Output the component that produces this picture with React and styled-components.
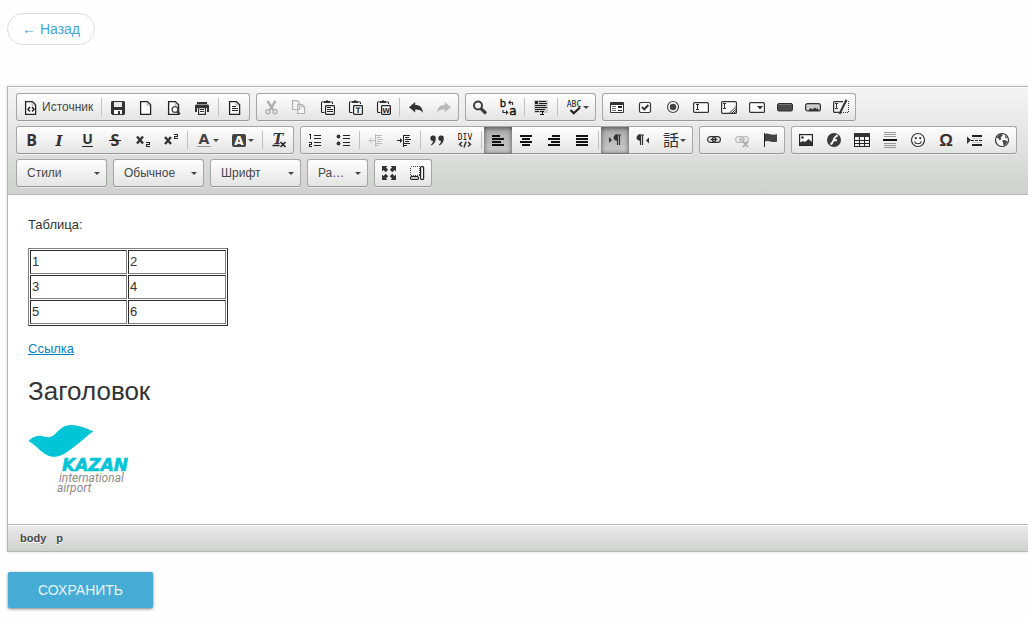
import React from "react";
import styled, { createGlobalStyle, css } from "styled-components";

const GlobalStyle = createGlobalStyle`
  body {
    margin: 0;
    background: #fefefe;
    color: #333;
    font-family: "Liberation Sans", Arial, sans-serif;
    font-size: 13px;
    overflow-x: hidden;
  }
`;

const DOC = "M2.6 2.6h6.8l3.2 3.2v9.6h-10z";
const dark = "#333";

const Glyph = ({ x = 8, y = 13, size = 14, family = "DejaVu Sans", ...rest }) => (
  <text
    x={x}
    y={y}
    fontSize={size}
    fontFamily={`"${family}", sans-serif`}
    fontWeight="bold"
    textAnchor="middle"
    stroke="none"
    fill={dark}
    {...rest}
  />
);

const Line = ({ d, ...rest }) => (
  <path d={d} fill="none" shapeRendering="crispEdges" {...rest} />
);

const Doc = ({ children }) => (
  <>
    <path d={DOC} fill="#fff" stroke="#222" strokeWidth="1.3" />
    <path d="M9 3v3.2h3.4" fill="none" stroke="#888" strokeWidth=".7" />
    {children}
  </>
);

const Clipboard = ({ children }) => (
  <>
    <path d="M5.500 13.500H3.500q-1 0-1-1V4q0-1.300 1.300-1.500M13.500 5V4q-.1-1.300-1.300-1.500" fill="none" stroke="#222" strokeWidth="1.100" />
    <path d="M4.500 4V2h2.300Q8 .2 9.200 2h2.300v2z" fill="#333" />
    <rect x="6.600" y="6.600" width="8.800" height="8.800" rx=".8" fill="#fff" stroke="#222" strokeWidth="1.200" />
    {children}
  </>
);

const Pilcrow = ({ x }) => (
  <g transform={`translate(${x} 0)`}>
    <path d="M4 3h6M6.500 3v10M8.500 3v10" stroke="#333" strokeWidth="1.200" fill="none" />
    <path d="M6.500 2.500v6.300C1.200 9 1.200 2.500 6.500 2.500z" fill="#333" />
  </g>
);

const Chain = ({ color }) => (
  <g fill="none" stroke={color} strokeWidth="1.200">
    <rect x="1.600" y="4.600" width="8" height="5.800" rx="2.900" />
    <rect x="6.400" y="4.600" width="8" height="5.800" rx="2.900" />
    <path d="M4.500 7.500h7" strokeWidth="1.400" />
  </g>
);

const icons = {
  source: (
    <Doc>
      <path d="M7 8L5 10.300l2 2.300M9 8l2 2.300-2 2.300" fill="none" stroke="#222" strokeWidth="1.500" />
    </Doc>
  ),
  save: (
    <>
      <path d="M2 2h12l1 1v12l-1 1H2.500L1 14.500V3z" fill="#333" />
      <path d="M4 3h8v5H4z" fill="#e8e8e8" />
      <path d="M4 11h8v4H4z" fill="#fff" />
      <path d="M8 12h2v3H8z" fill="#333" />
    </>
  ),
  page: <Doc />,
  preview: (
    <Doc>
      <circle cx="9" cy="10.500" r="2.900" fill="#fff" stroke="#444" strokeWidth="1.300" />
      <path d="M11.200 12.700l2.600 2.500" stroke="#333" strokeWidth="2.200" />
    </Doc>
  ),
  print: (
    <>
      <path d="M3 3h10v2H3zM2 5.500h12l1 1V13h-2V9H3v4H1V6.500z" fill="#333" />
      <path d="M4.600 8.600h6.800v6.800H4.600z" fill="#fff" stroke="#333" strokeWidth="1.200" />
      <Line d="M6 10.500h4M6 12.500h4" stroke="#333" />
    </>
  ),
  templates: (
    <Doc>
      <Line d="M5 7.500h4M5 9.500h6M5 11.500h6" stroke="#222" />
    </Doc>
  ),
  cut: (
    <g fill="none" stroke="#b0b0b0" strokeWidth="1.400">
      <path d="M4.500 2l5.700 8.800M12.500 2L6.800 10.800" strokeWidth="2.400" />
      <circle cx="5" cy="12.800" r="2" />
      <circle cx="12" cy="12.800" r="2" />
    </g>
  ),
  copy: (
    <g fill="#f5f5f5" stroke="#b3b3b3" strokeWidth="1.200">
      <path d="M1.600 1.600h4.600l2.400 2.400v6.500h-7zM6.600 5.600h4.600l2.400 2.400v6.500h-7z" />
      <path d="M11 5.800V8h2.400" fill="none" />
    </g>
  ),
  paste: (
    <Clipboard>
      <Line d="M8 8.500h4M8 10.500h6M8 12.500h6" stroke="#222" />
    </Clipboard>
  ),
  pasteText: (
    <Clipboard>
      <Glyph x="11" y="13.800" size="7.500">T</Glyph>
    </Clipboard>
  ),
  pasteWord: (
    <Clipboard>
      <Glyph x="11" y="13.600" size="7">W</Glyph>
    </Clipboard>
  ),
  undo: <path d="M1 8.200L7.200 3v3c5 0 7.300 2.600 7.800 8-1.800-3-4.200-3.600-7.800-3.500v3z" fill="#333" />,
  redo: <path d="M15 8.200L8.800 3v3C4 6 1.500 8.600 1 14c1.800-3 4.200-3.600 7.800-3.500v3z" fill="#bbb" />,
  find: (
    <g fill="none" stroke="#3c3c3c">
      <circle cx="6" cy="6.500" r="4" strokeWidth="2" />
      <path d="M9 9.700l5 4.800" strokeWidth="3.200" />
    </g>
  ),
  replace: (
    <>
      <Glyph x="3" y="8" size="10" family="DejaVu Sans" fontWeight="normal" fill="#111" stroke="#111" strokeWidth=".3">b</Glyph>
      <Glyph x="13" y="16" size="12" family="DejaVu Sans" fontWeight="normal" fill="#111" stroke="#111" strokeWidth=".4">a</Glyph>
      <path d="M9 3.500h3.500V6M3 11v2.500h3.500" fill="none" stroke="#333" strokeWidth="1.200" />
      <path d="M10.500 1L8 3.500 10.500 6zM6 11l2.500 2.500L6 16z" fill="#333" />
    </>
  ),
  selectAll: (
    <>
      <path d="M1 1h14v13H1z" fill="#ccc" />
      <Line d="M6 2.500h7M6 4.500h8M2 6.500h11M2 8.500h12M2 10.500h10M2 12.500h4" stroke="#222" />
      <path d="M2 2h3v3H2z" fill="#222" />
      <Line d="M7 12.500h4M9.500 12v4M7 15.500h4" stroke="#111" />
    </>
  ),
  spell: (
    <>
      <Glyph x="8" y="8" size="8" family="DejaVu Sans Mono" fontWeight="normal" fill="#111">ABC</Glyph>
      <path d="M4.500 11l3.200 3.200L14 8.500" fill="none" stroke="#222" strokeWidth="2.200" />
    </>
  ),
  form: (
    <>
      <rect x="1" y="3" width="14" height="11" rx="1" fill="#333" />
      <path d="M2 6h12v7H2z" fill="#fff" />
      <Line d="M3 7.500h4M3 9.500h4M3 11.500h4" stroke="#777" />
      <Line d="M9 7.500h4M9 8.500h4M9 11h4" stroke="#222" />
    </>
  ),
  checkbox: (
    <>
      <rect x="2.500" y="3.500" width="11" height="10" rx="1.500" fill="#fff" stroke="#333" strokeWidth="1.200" />
      <path d="M5 8l2.300 2.400 4-4.400" fill="none" stroke="#333" strokeWidth="2" />
    </>
  ),
  radio: (
    <>
      <circle cx="8" cy="8" r="5.500" fill="#fff" stroke="#444" strokeWidth="1.200" />
      <circle cx="8" cy="8" r="3.300" fill="#444" />
    </>
  ),
  textField: (
    <>
      <rect x=".6" y="3.600" width="14.800" height="9.800" rx="1" fill="#fff" stroke="#333" strokeWidth="1.200" />
      <Line d="M3 5.500h3M4.500 5v6M3 10.500h3" stroke="#333" />
    </>
  ),
  textarea: (
    <>
      <rect x=".6" y="2.600" width="14.800" height="11.800" rx="1" fill="#fff" stroke="#333" strokeWidth="1.200" />
      <Line d="M2 4.500h3M3.500 4v6M2 9.500h3" stroke="#333" />
      <path d="M8.500 14L15 7.500M11 14l4-4M13.200 14l1.800-1.800" stroke="#333" strokeWidth="1" />
    </>
  ),
  select: (
    <>
      <rect x=".6" y="3.600" width="14.800" height="9.800" rx="1" fill="#fff" stroke="#333" strokeWidth="1.200" />
      <path d="M8 7h6l-3 3.500z" fill="#333" />
    </>
  ),
  button: (
    <>
      <rect x=".5" y="4.500" width="15" height="7.500" rx="1.500" fill="#4c4c4c" stroke="#2c2c2c" />
      <path d="M1.500 5.500h13" stroke="#777" />
    </>
  ),
  imageButton: (
    <>
      <rect x=".6" y="4.600" width="14.800" height="7.400" rx="2" fill="#ccc" stroke="#333" strokeWidth="1.200" />
      <path d="M3 12l2.500-3 2 1.600L10 8.500l1.500 1.500 1-1 1.500 3z" fill="#333" />
    </>
  ),
  hidden: (
    <>
      <path d="M10 2.600H1.600q-1 0-1 1v8.800q0 1 1 1H6" fill="none" stroke="#333" strokeWidth="1.200" />
      <path d="M13 2.500h2.500v11H8" fill="none" stroke="#333" strokeDasharray="1 1" shapeRendering="crispEdges" />
      <Line d="M2 4.500h3M3.500 4v6M2 9.500h3" stroke="#333" />
      <path d="M13.500.8L6.500 15" stroke="#333" strokeWidth="2" />
    </>
  ),
  bold: <Glyph x="8.500" y="14" size="16" family="Open Sans">B</Glyph>,
  italic: <Glyph y="14" size="15" family="DejaVu Serif" fontStyle="italic">I</Glyph>,
  underline: (
    <>
      <Glyph x="8.500" y="12" size="14" family="Open Sans">U</Glyph>
      <Line d="M3 14.500h11" stroke="#222" />
    </>
  ),
  strike: (
    <>
      <Glyph y="14" size="16" family="Open Sans">S</Glyph>
      <Line d="M2 8.500h12" stroke="#222" />
    </>
  ),
  subscript: (
    <>
      <path d="M2 4.500l6 7M8 4.500l-6 7" stroke="#333" strokeWidth="2.400" />
      <Line d="M11 10.500h3.500v2h-3v2H15" stroke="#222" />
    </>
  ),
  superscript: (
    <>
      <path d="M2 5l6 7M8 5l-6 7" stroke="#333" strokeWidth="2.400" />
      <Line d="M11 2.500h3.500v2h-3v2H15" stroke="#222" />
    </>
  ),
  textColor: (
    <>
      <Glyph y="12" size="14" fill="#444">A</Glyph>
      <Line d="M1 14.500h14" stroke="#999" />
    </>
  ),
  bgColor: (
    <>
      <rect x="1" y="2" width="14" height="13" rx="2" fill="#444" />
      <Glyph y="13" size="12" fill="#fff">A</Glyph>
    </>
  ),
  removeFormat: (
    <>
      <Glyph x="7" y="12" size="14" family="DejaVu Serif" fontStyle="italic">T</Glyph>
      <path d="M1.500 13.500h7M9.500 10l5 5M14.500 10l-5 5" stroke="#222" strokeWidth="1.600" />
    </>
  ),
  numbered: (
    <Line d="M2 2.500h1.500V7M1.500 10.500H4v2H2.500v2H5M7 3.500h7M7 6.500h7M7 10.500h7M7 13.500h7" stroke="#222" />
  ),
  bulleted: (
    <>
      <circle cx="3.500" cy="4.500" r="1.900" fill="#333" />
      <circle cx="3.500" cy="11.500" r="1.900" fill="#333" />
      <Line d="M8 3.500h7M8 6.500h7M8 10.500h7M8 13.500h7" stroke="#222" />
    </>
  ),
  outdent: (
    <>
      <Line d="M8 3.500h6M9 5.500h4M9 7.500h6M9 9.500h4M8 11.500h6M8 13.500h3M2 8.500h5M7.500 2v13" stroke="#bbb" />
      <path d="M3.500 6L1 8.500 3.500 11" fill="none" stroke="#bbb" />
    </>
  ),
  indent: (
    <>
      <Line d="M8 3.500h6M9 5.500h4M9 7.500h6M9 9.500h4M8 11.500h6M8 13.500h3M1 8.500h5M7.500 3v12" stroke="#222" />
      <path d="M4 6l2.500 2.500L4 11z" fill="#222" />
    </>
  ),
  quote: (
    <g fill="#333">
      <path d="M4 3.500a2.600 2.600 0 0 1 2.800 2.800C6.800 10 5 12 2.500 13.500l-.6-.8C3.500 11.200 4 10 4 8.900A2.700 2.700 0 0 1 4 3.500z" />
      <path d="M12 3.500a2.600 2.600 0 0 1 2.800 2.800c0 3.700-1.800 5.700-4.300 7.200l-.6-.8c1.600-1.500 2.100-2.700 2.100-3.800a2.700 2.700 0 0 1 0-5.400z" />
    </g>
  ),
  div: (
    <>
      <Glyph y="8" size="8" family="DejaVu Sans Mono" fontWeight="normal" fill="#111">DIV</Glyph>
      <path d="M5 10l-2.500 2.200L5 14.500M11 10l2.500 2.200L11 14.500M9 9.500l-2 6" fill="none" stroke="#333" strokeWidth="1.500" />
    </>
  ),
  left: <Line d="M2 4h8M2 7h12M2 10h9M2 13h12" stroke="#111" strokeWidth="2" />,
  center: <Line d="M2 4h12M4 7h8M2 10h12M4 13h8" stroke="#111" strokeWidth="2" />,
  right: <Line d="M6 4h8M2 7h12M5 10h9M2 13h12" stroke="#111" strokeWidth="2" />,
  justify: <Line d="M2 4h12M2 7h12M2 10h12M2 13h12" stroke="#111" strokeWidth="2" />,
  ltr: (
    <>
      <Pilcrow x="4" />
      <path d="M2 5l3 3-3 3z" fill="#333" />
    </>
  ),
  rtl: (
    <>
      <Pilcrow x="-1" />
      <path d="M14 5.500l-3 3 3 3z" fill="#333" />
    </>
  ),
  language: (
    <Glyph y="14" size="16" family="Noto Sans CJK JP" fontWeight="normal">話</Glyph>
  ),
  link: <Chain color="#333" />,
  unlink: (
    <>
      <Chain color="#bbb" />
      <path d="M9 9.500l5 5.500M14 9.500L9 15" stroke="#aaa" strokeWidth="1.800" />
    </>
  ),
  anchor: (
    <>
      <Line d="M2.500 1v14" stroke="#222" />
      <path d="M3 2c3-2 5.500 1.800 12 .3v7.400c-6 1.500-8-2.200-12-.2z" fill="#444" />
    </>
  ),
  image: (
    <>
      <rect x="1.600" y="2.600" width="12.800" height="10.800" fill="#fff" stroke="#222" strokeWidth="1.200" />
      <circle cx="4.500" cy="5.500" r="1.300" fill="#333" />
      <path d="M2 13v-2.500l3-1.500 2 1 3.500-3L14 10v3z" fill="#333" />
    </>
  ),
  flash: (
    <>
      <circle cx="8" cy="8" r="7" fill="#3c3c3c" />
      <path d="M11.800 3.500C7.500 4 8 11 4.500 12.500M7 8.200h4" fill="none" stroke="#fff" strokeWidth="1.900" />
    </>
  ),
  table: (
    <>
      <path d="M0 1h16v4H0z" fill="#333" />
      <Line d="M.5 4v10.500h15V4M5.500 5v9M10.500 5v9M0 8.500h16M0 11.500h16" stroke="#222" />
    </>
  ),
  rule: (
    <>
      <Line d="M2 .5h12M2 2.500h12M2 4.500h12M2 11.500h12M2 13.500h12M2 15.500h12" stroke="#999" />
      <Line d="M1 8h14" stroke="#111" strokeWidth="2" />
    </>
  ),
  smiley: (
    <>
      <circle cx="8" cy="8" r="6.500" fill="#fff" stroke="#333" strokeWidth="1.200" />
      <path d="M4.500 9.500c1.300 3 5.700 3 7 0" fill="none" stroke="#333" strokeWidth="1.200" />
      <circle cx="5.800" cy="6.200" r="1.100" fill="#333" />
      <circle cx="10.200" cy="6.200" r="1.100" fill="#333" />
    </>
  ),
  special: <Glyph y="14" size="17" family="Liberation Sans">Ω</Glyph>,
  pageBreak: (
    <>
      <path d="M1 4.500L5 8l-4 4z" fill="#333" />
      <Line d="M6 4h10M6 13h10" stroke="#222" strokeWidth="2" />
      <Line d="M6 6.500h10M6 10.500h10" stroke="#ccc" />
      <Line d="M5 8.500h11" stroke="#222" strokeDasharray="3 1" />
    </>
  ),
  iframe: (
    <>
      <circle cx="8" cy="8" r="6.500" fill="#fff" stroke="#333" strokeWidth="1.200" />
      <path d="M3 5l3-3 3 .5-1 2-1.500.5 1 2-2 1.500-.8-2L3 6zM8 8.500l3-.5 2.500 1.500L11 13l-1.500.5-.5-3zM11 3l2.500 3-2 .5z" fill="#444" />
    </>
  ),
  maximize: (
    <path
      d="M1 1h5.500L5 2.500l2.200 2.200-2.500 2.500L2.500 5 1 6.500zM15 1H9.500L11 2.500 8.800 4.700l2.500 2.500L13.500 5 15 6.500zM1 15h5.500L5 13.500l2.200-2.200-2.500-2.500L2.500 11 1 9.500zM15 15H9.500l1.500-1.500-2.200-2.200 2.500-2.500 2.200 2.200L15 9.500z"
      fill="#333"
    />
  ),
  blocks: (
    <>
      <path d="M1.500 1.500h9v9h-9z" fill="none" stroke="#444" strokeDasharray="1 1" shapeRendering="crispEdges" />
      <rect x="11.600" y="1.600" width="3" height="12.800" rx="1" fill="#fff" stroke="#222" strokeWidth="1.200" />
      <rect x="1.600" y="11.600" width="7.800" height="2.800" rx="1" fill="#fff" stroke="#222" strokeWidth="1.200" />
    </>
  ),
};

const groups = [
  [["source", "Источник"], "|", ["save", "Сохранить"], ["page", "Новая страница"], ["preview", "Предпросмотр"], ["print", "Печать"], "|", ["templates", "Шаблоны"]],
  [["cut", "Вырезать"], ["copy", "Копировать"], ["paste", "Вставить"], ["pasteText", "Вставить только текст"], ["pasteWord", "Вставить из Word"], "|", ["undo", "Отменить"], ["redo", "Повторить"]],
  [["find", "Найти"], ["replace", "Заменить"], "|", ["selectAll", "Выделить все"], "|", ["spell", "Проверка орфографии"]],
  [["form", "Форма"], ["checkbox", "Чекбокс"], ["radio", "Радиокнопка"], ["textField", "Текстовое поле"], ["textarea", "Многострочное поле"], ["select", "Выпадающий список"], ["button", "Кнопка"], ["imageButton", "Кнопка-изображение"], ["hidden", "Скрытое поле"]],
  [["bold", "Полужирный"], ["italic", "Курсив"], ["underline", "Подчеркнутый"], ["strike", "Зачеркнутый"], ["subscript", "Подстрочный индекс"], ["superscript", "Надстрочный индекс"], "|", ["textColor", "Цвет текста"], ["bgColor", "Цвет фона"], "|", ["removeFormat", "Убрать форматирование"]],
  [["numbered", "Нумерованный список"], ["bulleted", "Маркированный список"], "|", ["outdent", "Уменьшить отступ"], ["indent", "Увеличить отступ"], "|", ["quote", "Цитата"], ["div", "Контейнер Div"], "|", ["left", "По левому краю"], ["center", "По центру"], ["right", "По правому краю"], ["justify", "По ширине"], "|", ["ltr", "Слева направо"], ["rtl", "Справа налево"], ["language", "Язык"]],
  [["link", "Ссылка"], ["unlink", "Убрать ссылку"], ["anchor", "Якорь"]],
  [["image", "Изображение"], ["flash", "Flash"], ["table", "Таблица"], ["rule", "Горизонтальная линия"], ["smiley", "Смайлы"], ["special", "Специальный символ"], ["pageBreak", "Разрыв страницы"], ["iframe", "iFrame"]],
];

const viewGroup = [["maximize", "Развернуть"], ["blocks", "Отображать блоки"]];

const combos = [
  { label: "Стили" },
  { label: "Обычное" },
  { label: "Шрифт" },
  { label: "Размер", narrow: true },
];

const withMenu = ["spell", "textColor", "bgColor", "language"];
const pressed = ["left", "ltr"];
const disabled = ["cut", "copy", "redo", "outdent", "unlink"];

const rows = [["1", "2"], ["3", "4"], ["5", "6"]];

const Toolgroup = ({ items }) => (
  <Group role="group">
    {items.map((item, i) =>
      item === "|" ? (
        <Separator key={i} />
      ) : (
        <ToolButton
          key={item[0]}
          type="button"
          aria-label={item[1]}
          disabled={disabled.includes(item[0])}
          $on={pressed.includes(item[0])}
        >
          <svg width="16" height="16" viewBox="0 0 16 16" aria-hidden="true">
            {icons[item[0]]}
          </svg>
          {item[0] === "source" && <ButtonLabel>{item[1]}</ButtonLabel>}
          {withMenu.includes(item[0]) && <Caret />}
        </ToolButton>
      )
    )}
  </Group>
);

const Logo = () => (
  <svg width="100" height="70" viewBox="0 0 100 70" role="img" aria-label="Kazan international airport">
    <path
      d="M.5 17C4 13.500 8 11.300 12.500 11.800C17 12.500 19 14 23 12.800C29 10.500 32 1 43 1C51 1 58 4.500 65.500 7.200C57 13 49 21.500 39 28C34 31.500 29 33.500 23 32.500C14.500 30.500 9 22 .5 17z"
      fill="#00c5d7"
    />
    <text x="34" y="47" fontFamily="DejaVu Sans" fontSize="17" fontWeight="bold" fontStyle="italic" fill="#00c5d7" stroke="#00c5d7" strokeWidth=".6">
      KAZAN
    </text>
    <g fontFamily="Roboto" fontSize="12" fontStyle="italic" fill="#8c8c8c">
      <text x="31" y="58">international</text>
      <text x="29" y="68">airport</text>
    </g>
  </svg>
);

const App = () => (
  <Page>
    <GlobalStyle />
    <BackLink href="#back">← Назад</BackLink>
    <Editor>
      <Toolbar role="toolbar">
        {groups.map((items, i) => (
          <Toolgroup key={i} items={items} />
        ))}
        {combos.map(({ label, narrow }) => (
          <Combo key={label} $narrow={narrow}>
            <select aria-label={label}>
              <option>{label}</option>
            </select>
          </Combo>
        ))}
        <Toolgroup items={viewGroup} />
      </Toolbar>
      <Content>
        <p>Таблица:</p>
        <table>
          <tbody>
            {rows.map((row) => (
              <tr key={row[0]}>
                {row.map((cell) => (
                  <td key={cell}>{cell}</td>
                ))}
              </tr>
            ))}
          </tbody>
        </table>
        <p>
          <a href="#link">Ссылка</a>
        </p>
        <h2>Заголовок</h2>
        <Logo />
      </Content>
      <ElementsPath>
        <a href="#body">body</a>
        <a href="#p">p</a>
      </ElementsPath>
    </Editor>
    <Actions>
      <SaveButton type="submit">СОХРАНИТЬ</SaveButton>
    </Actions>
  </Page>
);

const Page = styled.main`
  display: flex;
  flex-direction: column;
  align-items: flex-start;
  padding: 13px 0 12px 7px;
`;

const BackLink = styled.a`
  padding: 0 14px;
  border: 1px solid #ddd;
  border-radius: 16px;
  background: #fff;
  color: #3fa9d5;
  font-size: 14px;
  line-height: 30px;
  text-decoration: none;
`;

const Editor = styled.section`
  align-self: stretch;
  margin-top: 41px;
  border: 1px solid #b6b6b6;
  border-right: 0;
  box-shadow: 0 0 3px rgba(0, 0, 0, 0.15);
`;

const Toolbar = styled.div`
  display: flex;
  flex-wrap: wrap;
  gap: 5px 6px;
  padding: 6px 8px 7px;
  border-bottom: 1px solid #b6b6b6;
  background: linear-gradient(#f5f5f5, #cfd1cf);
  box-shadow: 0 1px 0 #fff inset;
`;

const frame = css`
  border: 1px solid #a6a6a6;
  border-bottom-color: #979797;
  border-radius: 3px;
  background: linear-gradient(#fff, #e4e4e4);
  box-shadow: 0 1px 0 rgba(255, 255, 255, 0.5),
    0 0 2px rgba(255, 255, 255, 0.15) inset, 0 1px 0 rgba(255, 255, 255, 0.15) inset;
`;

const Group = styled.div`
  display: flex;
  ${frame}
`;

const Separator = styled.span`
  width: 1px;
  height: 18px;
  margin: 4px 2px 0;
  background: #c0c0c0;
`;

const ToolButton = styled.button`
  display: flex;
  align-items: center;
  height: 26px;
  padding: 0 6px;
  border: 0;
  background: none;
  color: #474747;
  font: 12px "Liberation Sans", Arial, sans-serif;
  cursor: default;
  svg {
    flex: none;
    overflow: visible;
  }
  ${({ $on }) =>
    $on &&
    css`
      background: linear-gradient(#aaa, #cacaca);
      box-shadow: 0 1px 5px rgba(0, 0, 0, 0.6) inset, 0 1px 0 rgba(0, 0, 0, 0.2);
    `}
`;

const ButtonLabel = styled.span`
  padding-left: 3px;
  line-height: 18px;
`;

const Caret = styled.span`
  margin-left: 1px;
  border: 3px solid transparent;
  border-top-color: #474747;
  border-bottom: 0;
`;

const Combo = styled.div`
  position: relative;
  box-sizing: border-box;
  width: ${({ $narrow }) => ($narrow ? "61px" : "91px")};
  ${frame}
  select {
    width: 100%;
    height: 26px;
    padding: 0 20px 0 10px;
    border: 0;
    appearance: none;
    background: none;
    color: #474747;
    font: 12px "Liberation Sans", Arial, sans-serif;
    text-overflow: ellipsis;
  }
  &::after {
    content: "";
    position: absolute;
    top: 12px;
    right: 6px;
    border: 3px solid transparent;
    border-top-color: #474747;
    border-bottom: 0;
    pointer-events: none;
  }
`;

const Content = styled.article`
  padding: 20px 20px 30px;
  background: #fff;
  line-height: 20px;
  p {
    margin: 0 0 13px;
  }
  a {
    color: #0782c1;
  }
  h2 {
    margin: 17px 0;
    font-size: 26px;
    font-weight: normal;
    line-height: 31px;
  }
  table {
    width: 200px;
    margin-bottom: 13px;
    border: 1px solid;
    border-color: #808080 #2c2c2c #2c2c2c #808080;
    border-spacing: 1px;
  }
  td {
    padding: 1px;
    border: 1px solid;
    border-color: #2c2c2c #808080 #808080 #2c2c2c;
  }
  td:first-child {
    width: 93px;
  }
  svg {
    display: block;
    overflow: visible;
  }
`;

const ElementsPath = styled.nav`
  display: flex;
  gap: 10px;
  padding: 6px 12px 5px;
  border-top: 1px solid #b6b6b6;
  background: linear-gradient(#ebebeb, #cfd1cf);
  box-shadow: 0 1px 0 #fff inset;
  a {
    color: #474747;
    font-size: 11px;
    font-weight: bold;
    line-height: 15px;
    text-decoration: none;
    text-shadow: 0 1px 0 #fff;
  }
`;

const Actions = styled.div`
  padding: 20px 1px 0;
`;

const SaveButton = styled.button`
  height: 36px;
  padding: 0 30px;
  border: 0;
  border-radius: 2px;
  background: #46abd5;
  box-shadow: 0 1px 3px rgba(0, 0, 0, 0.5);
  color: #e8f5fa;
  font-family: "Liberation Sans", Arial, sans-serif;
  font-size: 14px;
`;

export default App;
